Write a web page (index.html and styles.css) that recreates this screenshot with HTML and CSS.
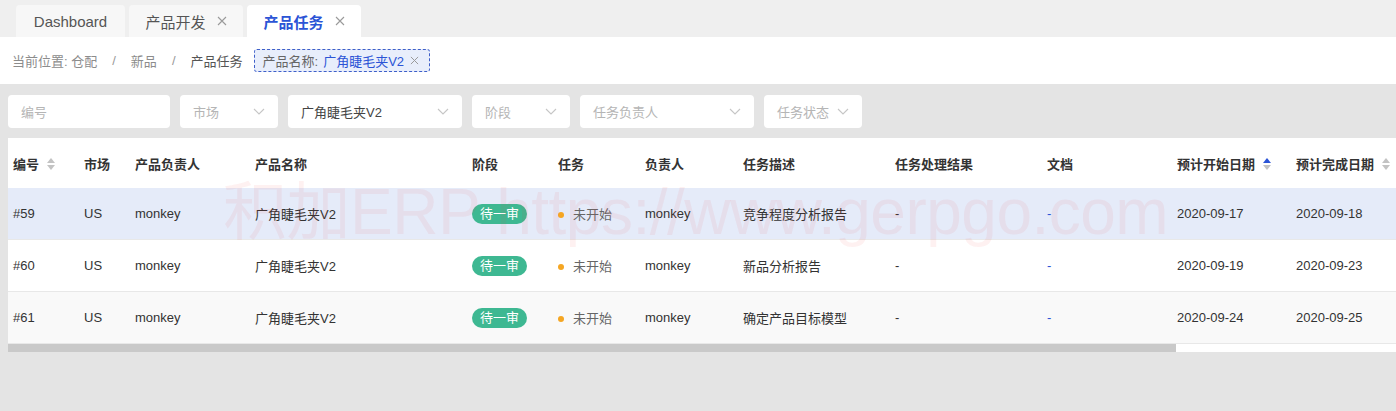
FILE: index.html
```html
<!DOCTYPE html>
<html lang="zh">
<head>
<meta charset="utf-8">
<title>产品任务</title>
<link rel="stylesheet" href="styles.css">
</head>
<body>
<div class="tabs">
  <div class="tab">Dashboard</div>
  <div class="tab">产品开发<svg class="x" viewBox="0 0 10 10"><path d="M1 1l8 8M9 1l-8 8" stroke="#9a9a9a" stroke-width="1.1" fill="none"/></svg></div>
  <div class="tab active">产品任务<svg class="x" viewBox="0 0 10 10"><path d="M1 1l8 8M9 1l-8 8" stroke="#9a9a9a" stroke-width="1.1" fill="none"/></svg></div>
</div>
<div class="crumbs">
  <span class="c-light">当前位置: 仓配</span>
  <span class="sep">/</span>
  <span class="c-light">新品</span>
  <span class="sep">/</span>
  <span class="c-dark">产品任务</span>
  <span class="tag"><span class="tag-k">产品名称:</span><span class="tag-v">广角睫毛夹V2</span><svg class="tag-x" viewBox="0 0 10 10"><path d="M1 1l8 8M9 1l-8 8" stroke="#999" stroke-width="1.1" fill="none"/></svg></span>
</div>
<div class="main">
  <div class="filters">
    <div class="f f-id"><span class="ph">编号</span></div>
    <div class="f f-sm"><span class="ph">市场</span><svg class="chev" viewBox="0 0 12 8"><path d="M1 1l5 5 5-5" fill="none" stroke="#c6c6c6" stroke-width="1.1"/></svg></div>
    <div class="f f-lg"><span class="val">广角睫毛夹V2</span><svg class="chev" viewBox="0 0 12 8"><path d="M1 1l5 5 5-5" fill="none" stroke="#c6c6c6" stroke-width="1.1"/></svg></div>
    <div class="f f-sm"><span class="ph">阶段</span><svg class="chev" viewBox="0 0 12 8"><path d="M1 1l5 5 5-5" fill="none" stroke="#c6c6c6" stroke-width="1.1"/></svg></div>
    <div class="f f-lg"><span class="ph">任务负责人</span><svg class="chev" viewBox="0 0 12 8"><path d="M1 1l5 5 5-5" fill="none" stroke="#c6c6c6" stroke-width="1.1"/></svg></div>
    <div class="f f-sm f-st"><span class="ph">任务状态</span><svg class="chev" viewBox="0 0 12 8"><path d="M1 1l5 5 5-5" fill="none" stroke="#c6c6c6" stroke-width="1.1"/></svg></div>
  </div>
  <div class="tablewrap">
    <table class="grid">
      <colgroup>
        <col style="width:71px"><col style="width:51px"><col style="width:120px"><col style="width:217px">
        <col style="width:86px"><col style="width:87px"><col style="width:98px"><col style="width:152px">
        <col style="width:152px"><col style="width:130px"><col style="width:119px"><col style="width:120px">
      </colgroup>
      <thead>
        <tr>
          <th>编号<span class="sort"><i class="up"></i><i class="dn"></i></span></th>
          <th>市场</th><th>产品负责人</th><th>产品名称</th><th>阶段</th><th>任务</th><th>负责人</th>
          <th>任务描述</th><th>任务处理结果</th><th>文档</th>
          <th>预计开始日期<span class="sort"><i class="up on"></i><i class="dn"></i></span></th>
          <th>预计完成日期<span class="sort"><i class="up"></i><i class="dn"></i></span></th>
        </tr>
      </thead>
      <tbody>
        <tr class="hl">
          <td>#59</td><td>US</td><td>monkey</td><td>广角睫毛夹V2</td>
          <td><span class="badge">待一审</span></td>
          <td><span class="dot"></span><span class="st">未开始</span></td>
          <td>monkey</td><td>竞争程度分析报告</td><td>-</td><td class="doc">-</td>
          <td>2020-09-17</td><td>2020-09-18</td>
        </tr>
        <tr>
          <td>#60</td><td>US</td><td>monkey</td><td>广角睫毛夹V2</td>
          <td><span class="badge">待一审</span></td>
          <td><span class="dot"></span><span class="st">未开始</span></td>
          <td>monkey</td><td>新品分析报告</td><td>-</td><td class="doc">-</td>
          <td>2020-09-19</td><td>2020-09-23</td>
        </tr>
        <tr class="alt">
          <td>#61</td><td>US</td><td>monkey</td><td>广角睫毛夹V2</td>
          <td><span class="badge">待一审</span></td>
          <td><span class="dot"></span><span class="st">未开始</span></td>
          <td>monkey</td><td>确定产品目标模型</td><td>-</td><td class="doc">-</td>
          <td>2020-09-24</td><td>2020-09-25</td>
        </tr>
      </tbody>
    </table>
    <div class="scroll"><div class="thumb"></div><div class="track"></div></div>
  </div>
  <div class="watermark">积加ERP https://www.gerpgo.com</div>
</div>
</body>
</html>
```
FILE: styles.css
```css
html, body {
  margin: 0;
  padding: 0;
  overflow: hidden;
}
body {
  width: 1396px;
  height: 411px;
  background: #e4e4e4;
  font-family: "Liberation Sans", "Noto Sans CJK SC", sans-serif;
  font-size: 13px;
  color: #333;
}
.tabs {
  display: flex;
  gap: 4px;
  height: 37px;
  padding: 5px 0 0 16px;
  box-sizing: border-box;
  background: #efefef;
}
.tab {
  width: 109px;
  height: 32px;
  box-sizing: border-box;
  display: flex;
  align-items: center;
  justify-content: center;
  gap: 11px;
  background: #f7f7f7;
  border-radius: 4px 4px 0 0;
  color: #555;
  font-size: 15px;
}
.tab:nth-child(2), .tab:nth-child(3) { width: 114px; }
.tab.active {
  background: #fff;
  color: #2b54d6;
  font-weight: bold;
}
.tab .x {
  width: 10px;
  height: 10px;
}
.crumbs {
  height: 47px;
  background: #fff;
  display: flex;
  align-items: center;
  padding-left: 12px;
  font-size: 13px;
}
.c-light { color: #8c8c8c; }
.c-dark { color: #555; }
.sep { color: #999; margin: 0 15px; }
.tag {
  margin-left: 11px;
  height: 23px;
  box-sizing: border-box;
  border: 1px dashed #3e5fc9;
  border-radius: 3px;
  background: #e8eefb;
  display: flex;
  align-items: center;
  padding: 0 10px 0 8px;
}
.tag-k { color: #666; }
.tag-v { color: #2b54d6; margin-left: 5px; }
.tag-x { width: 9px; height: 9px; margin-left: 6px; }
.main {
  position: relative;
  padding: 11px 0 0 8px;
}
.filters {
  display: flex;
  gap: 10px;
  height: 33px;
}
.f {
  background: #fff;
  border-radius: 4px;
  display: flex;
  align-items: center;
  justify-content: space-between;
  padding: 0 13px;
  box-sizing: border-box;
}
.f-id { width: 162px; }
.f-sm { width: 98px; }
.f-lg { width: 174px; }
.f-st { justify-content: flex-start; gap: 8px; }
.ph { color: #b5b5b5; }
.val { color: #444; }
.chev { width: 12px; height: 8px; }
.tablewrap {
  margin-top: 10px;
  width: 1420px;
  overflow: hidden;
}
.grid {
  border-collapse: collapse;
  table-layout: fixed;
  width: 1403px;
  background: #fff;
}
.grid th, .grid td {
  text-align: left;
  padding: 0 0 0 5px;
  white-space: nowrap;
  overflow: hidden;
}
.grid th {
  height: 50px;
  font-weight: bold;
  color: #333;
  background: #fff;
}
.grid td {
  height: 51px;
  border-bottom: 1px solid #e8e8e8;
  color: #333;
}
.grid tr.hl td { background: #e5ebf9; }
.grid tr.alt td { background: #f9f9f9; }
.grid td.doc { color: #2b54d6; }
.sort {
  display: inline-flex;
  flex-direction: column;
  gap: 2px;
  margin-left: 8px;
  vertical-align: middle;
  position: relative;
  top: -1px;
}
.sort i {
  display: block;
  width: 0;
  height: 0;
  border-left: 4px solid transparent;
  border-right: 4px solid transparent;
}
.sort i.up { border-bottom: 5px solid #c3c3c3; }
.sort i.dn { border-top: 5px solid #c3c3c3; }
.sort i.up.on { border-bottom-color: #2b54d6; }
.badge {
  display: inline-block;
  background: #3eb892;
  color: #fff;
  border-radius: 10px;
  padding: 0 8px;
  height: 20px;
  line-height: 20px;
}
.dot {
  display: inline-block;
  width: 6px;
  height: 6px;
  border-radius: 50%;
  background: #f5a623;
  margin: 0 9px 0 0;
  vertical-align: middle;
  position: relative;
  top: -1px;
}
.st { color: #666; }
.scroll {
  display: flex;
  height: 8px;
}
.thumb { width: 1168px; background: #c9c9c9; }
.track { flex: 1; background: #fff; }
.watermark {
  position: absolute;
  left: 223px;
  top: 96px;
  font-size: 64px;
  letter-spacing: -0.5px;
  color: rgba(240, 60, 60, 0.07);
  white-space: nowrap;
  pointer-events: none;
  line-height: 1;
}
```
